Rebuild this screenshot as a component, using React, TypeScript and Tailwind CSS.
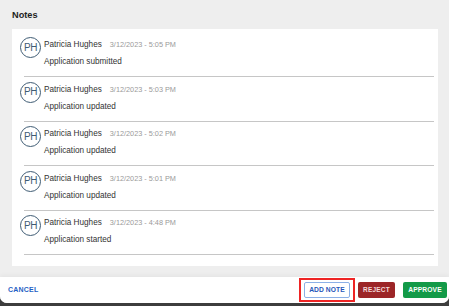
import React from "react";

const notes = [
  { time: "3/12/2023 - 5:05 PM", text: "Application submitted" },
  { time: "3/12/2023 - 5:03 PM", text: "Application updated" },
  { time: "3/12/2023 - 5:02 PM", text: "Application updated" },
  { time: "3/12/2023 - 5:01 PM", text: "Application updated" },
  { time: "3/12/2023 - 4:48 PM", text: "Application started" },
];

export default function App() {
  return (
    <div
      className="w-[449px] h-[306px] bg-[#3d3d3d] overflow-hidden"
      style={{ fontFamily: '"Liberation Sans", Arial, sans-serif' }}
    >
      <div className="h-[303px] bg-[#eeeeee] rounded-b-[7px] flex flex-col overflow-hidden">
        <div className="h-[29px] pl-[12px] pt-[10px]">
          <div className="text-[9.2px] leading-[10px] font-bold text-[#222]">Notes</div>
        </div>
        <div className="ml-[12px] w-[426px] h-[237px] bg-white pt-[8px]">
          {notes.map((n, i) => (
            <div key={i}>
              <div className="pl-[8px]">
                <div className="flex items-start h-[20px]">
                  <div className="w-[21px] h-[21px] shrink-0 rounded-full border-[1.2px] border-[#3f5c74] flex items-center justify-center text-[#3f5c74] text-[10px] tracking-[-0.4px] leading-none">
                    PH
                  </div>
                  <div className="ml-[3px] mt-[3px] flex items-center h-[10px]">
                    <span className="text-[8.2px] leading-[10px] text-[#333]">Patricia Hughes</span>
                    <span className="ml-[8px] text-[7.3px] leading-[10px] text-[#9a9a9a]">{n.time}</span>
                  </div>
                </div>
                <div className="pl-[24px] text-[8.2px] leading-[10px] text-[#333]">{n.text}</div>
              </div>
              <div className="mt-[9px] ml-[12px] mr-[4px] h-[1px] bg-[#c6c6c6]" />
              {i < notes.length - 1 && <div className="h-[4.5px]" />}
            </div>
          ))}
        </div>
        <div className="mt-[11px] flex-1 bg-white shadow-[0_-2px_4px_rgba(0,0,0,0.04)] flex items-center">
          <div className="ml-[8px] text-[7px] font-bold tracking-[0.2px] text-[#1f5fc4]">CANCEL</div>
          <div className="ml-auto flex items-center">
            <div className="border-2 border-[#ee2424] px-[3px] py-[2px]">
              <div className="w-[46px] h-[16px] border border-[#8cb0e6] rounded-[2px] bg-white flex items-center justify-center text-[6.7px] font-bold tracking-[0.1px] text-[#1f56b8]">
                ADD NOTE
              </div>
            </div>
            <div className="ml-[3px] w-[37px] h-[16px] rounded-[2px] bg-[#9c2527] flex items-center justify-center text-[6.5px] font-bold tracking-[0.2px] text-[#f3dada]">
              REJECT
            </div>
            <div className="ml-[8px] mr-[2px] w-[44px] h-[16px] rounded-[2px] bg-[#139a48] flex items-center justify-center text-[6.7px] font-bold tracking-[0.1px] text-white">
              APPROVE
            </div>
          </div>
        </div>
      </div>
    </div>
  );
}
